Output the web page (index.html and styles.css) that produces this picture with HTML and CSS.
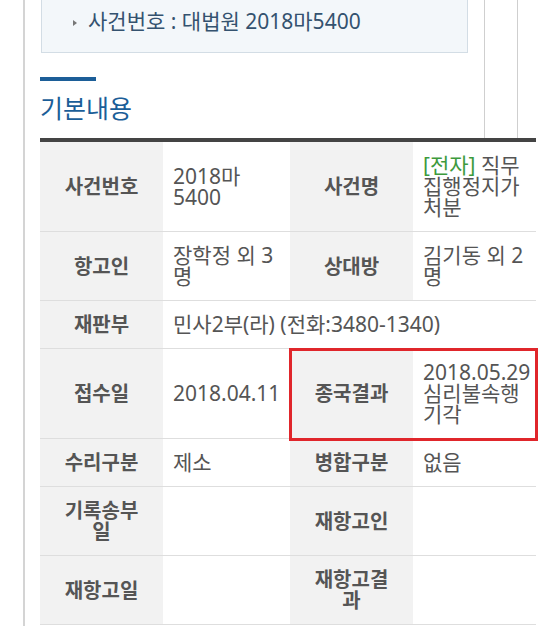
FILE: index.html
```html
<!DOCTYPE html>
<html lang="ko">
<head>
<meta charset="utf-8">
<title>기본내용</title>
<link rel="stylesheet" href="styles.css">
</head>
<body>
<div class="page">
  <div class="top">
    <div class="top-main">
      <div class="case-box">
        <span class="bullet"></span>
        <span class="case-text">사건번호 : 대법원 2018마5400</span>
      </div>
      <div class="title-bar"></div>
      <h2 class="title">기본내용</h2>
    </div>
    <div class="top-side"></div>
  </div>
  <div class="info-grid">
    <div class="th"><span>사건번호</span></div>
    <div class="td"><span>2018마5400</span></div>
    <div class="th"><span>사건명</span></div>
    <div class="td"><p class="cell-text"><span class="tag">[전자]</span> 직무집행정지가처분</p></div>

    <div class="th"><span>항고인</span></div>
    <div class="td"><span>장학정 외 3 명</span></div>
    <div class="th"><span>상대방</span></div>
    <div class="td"><span>김기동 외 2 명</span></div>

    <div class="th"><span>재판부</span></div>
    <div class="td td-wide"><span>민사2부(라) (전화:3480-1340)</span></div>

    <div class="th"><span>접수일</span></div>
    <div class="td"><span>2018.04.11</span></div>
    <div class="th result-th"><span>종국결과</span></div>
    <div class="td result-td"><span>2018.05.29 심리불속행기각</span></div>
    <div class="mark"></div>

    <div class="th"><span>수리구분</span></div>
    <div class="td"><span>제소</span></div>
    <div class="th"><span>병합구분</span></div>
    <div class="td"><span>없음</span></div>

    <div class="th"><span>기록송부일</span></div>
    <div class="td"></div>
    <div class="th"><span>재항고인</span></div>
    <div class="td"></div>

    <div class="th"><span>재항고일</span></div>
    <div class="td"></div>
    <div class="th"><span>재항고결과</span></div>
    <div class="td"></div>
  </div>
</div>
</body>
</html>
```

FILE: styles.css
```css
html, body {
  margin: 0;
  padding: 0;
  background: #ffffff;
}

body {
  width: 550px;
  height: 626px;
  overflow: hidden;
  font-family: "Noto Sans", "Noto Sans CJK KR", sans-serif;
}

.page {
  margin-left: 23px;
  border-left: 2px solid #d4d4d4;
  padding-left: 15px;
  min-height: 626px;
  box-sizing: border-box;
}

.top {
  display: flex;
}

.top-main {
  width: 444px;
  border-right: 1px solid #cfcfcf;
  padding-bottom: 14px;
}

.top-side {
  width: 32px;
  border-right: 1px solid #cfcfcf;
}

.case-box {
  margin-left: 1px;
  width: 427px;
  height: 53px;
  box-sizing: border-box;
  background: #f3f7fa;
  border: 1px solid #d3dde5;
  border-top: none;
  display: flex;
  align-items: center;
  padding: 0 0 10px 31px;
}

.bullet {
  width: 0;
  height: 0;
  border-top: 3px solid transparent;
  border-bottom: 3px solid transparent;
  border-left: 4px solid #777;
  margin-right: 11px;
  margin-top: 4px;
}

.case-text {
  font-size: 21px;
  line-height: 26px;
  color: #34526f;
}

.title-bar {
  margin-top: 24px;
  width: 56px;
  height: 4px;
  background: #1c5e98;
}

.title {
  margin: 11px 0 0;
  font-size: 25px;
  line-height: 32px;
  font-weight: 400;
  color: #1b5e98;
}

.info-grid {
  display: grid;
  grid-template-columns: 123px 127px 123px 123px;
  border-top: 4px solid #444444;
  width: 496px;
}

.th, .td {
  line-height: 21px;
  color: #555555;
  border-bottom: 1px solid #dedede;
  padding: 13px 4px 13px 10px;
  display: flex;
  align-items: center;
}

.th {
  font-size: 20px;
  background: #f2f2f2;
  font-weight: 700;
  justify-content: center;
  text-align: center;
  padding-left: 16px;
  padding-right: 16px;
}

.td {
  font-size: 21px;
  background: #ffffff;
}

.cell-text {
  margin: 0;
}

.td-wide {
  grid-column: 2 / 5;
}

.result-th {
  grid-row: 4;
  grid-column: 3;
}

.result-td {
  grid-row: 4;
  grid-column: 4;
}

.tag {
  color: #3d9a3d;
}

.mark {
  grid-row: 4;
  grid-column: 3 / 5;
  border: 3px solid #e0262b;
  margin: -1px -2px -2px -1px;
  pointer-events: none;
  z-index: 2;
}
```
